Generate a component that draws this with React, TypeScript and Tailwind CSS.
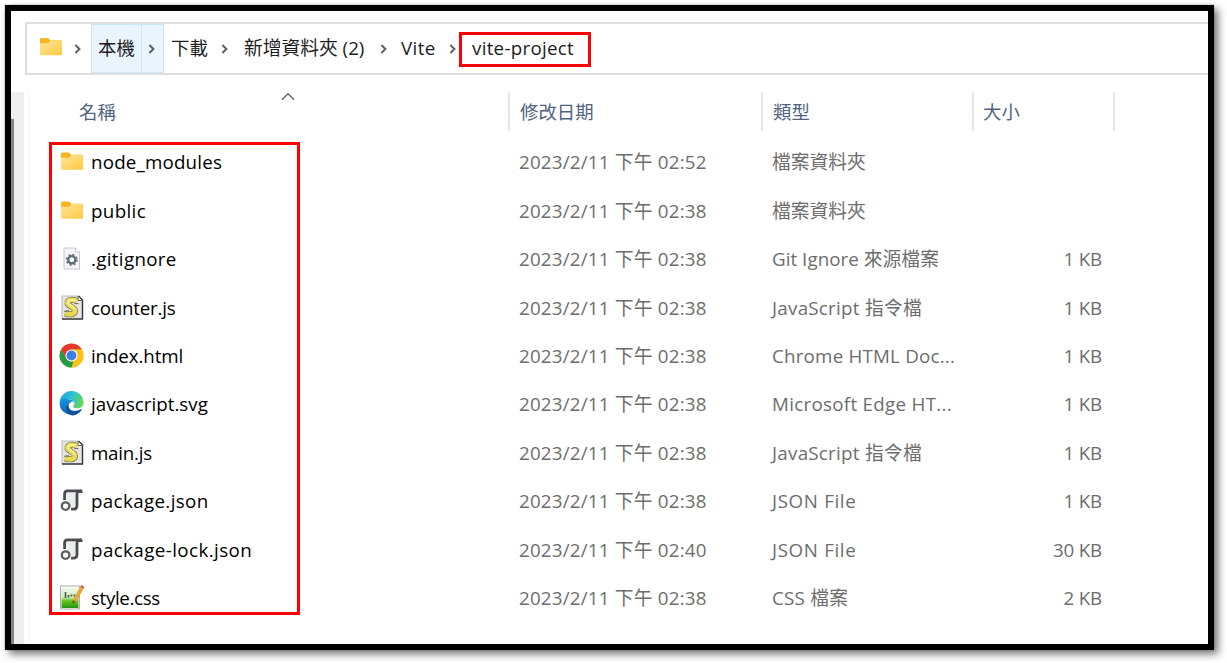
import React from 'react';

type IconKind = 'folder' | 'config' | 'script' | 'chrome' | 'edge' | 'json' | 'css';

const FolderIcon = () => (
  <svg className="block" width="24" height="24" viewBox="0 0 24 24">
    <defs>
      <linearGradient id="folderFront" x1="0" y1="0" x2="1" y2="1">
        <stop offset="0" stopColor="#ffe69c" />
        <stop offset="1" stopColor="#fdc940" />
      </linearGradient>
    </defs>
    <path d="M1 4.2Q1 3 2.2 3H8.2Q9 3 9.6 3.6L11.3 5.2H21.5Q23 5.2 23 6.5V12H1Z" fill="#f7b61d" />
    <path d="M1 8.3H8.6Q9.4 8.3 10 7.6L11.4 5.4H21.8Q23 5.4 23 6.6V19Q23 20.3 21.8 20.3H2.2Q1 20.3 1 19Z" fill="url(#folderFront)" />
  </svg>
);

const ConfigIcon = () => (
  <svg className="block" width="24" height="24" viewBox="0 0 24 24">
    <path d="M4 1.5H15.5L19.5 5.5V22.5H4Z" fill="#f4f4f4" stroke="#c6c8ca" strokeWidth="1" />
    <path d="M15.5 1.5V5.5H19.5" fill="#fff" stroke="#c6c8ca" strokeWidth="1" />
    <circle cx="11.8" cy="13.3" r="5" fill="none" stroke="#6f818c" strokeWidth="2.2" strokeDasharray="1.96 1.967" />
    <circle cx="11.8" cy="13.3" r="3.6" fill="#f8f8f8" stroke="#5a6d78" strokeWidth="2.3" />
  </svg>
);

const ScriptIcon = () => (
  <svg className="block" width="24" height="26" viewBox="0 0 24 26">
    <path d="M2 1.5H18.5L22.5 5.5V24.5H2Z" fill="#e4e4ea" />
    <path d="M2 24.5V1.5H18.5" fill="none" stroke="#bcbcc0" strokeWidth="1.1" />
    <path d="M18.5 1.5L22.5 5.5V24.5H2" fill="none" stroke="#333" strokeWidth="1.4" />
    <path d="M18 1.5V6H22.5Z" fill="#fff" stroke="#444" strokeWidth=".8" />
    <path d="M17 6.6C13.5 4.4 6.8 5 7.6 9C8.3 12 15.3 12.6 15 16.4C14.7 20.3 8.7 20.4 5 18.9" fill="none" stroke="#77743f" strokeWidth="6" />
    <path d="M17 6.6C13.5 4.4 6.8 5 7.6 9C8.3 12 15.3 12.6 15 16.4C14.7 20.3 8.7 20.4 5 18.9" fill="none" stroke="#e6da55" strokeWidth="4.8" />
    <path d="M16 6C12 4.6 7.5 5.6 8.3 8.8C9.2 11.4 15 12 14.8 15.5" fill="none" stroke="#f8f2a0" strokeWidth="1.8" />
    <path d="M4 16.8L9 16.3M14.5 9L18.5 9.2" stroke="#68663f" strokeWidth="1" />
  </svg>
);

const ChromeIcon = () => (
  <svg className="block" width="26" height="26" viewBox="0 0 26 26">
    <circle cx="13" cy="13" r="12.5" fill="#fbc116" />
    <path d="M2.2 6.75A12.5 12.5 0 0 1 23.8 6.75H13L7.6 16.1Z" fill="#e33b2e" />
    <path d="M2.2 6.75L7.6 16.1A6.2 6.2 0 0 0 15 18.9L13 25.5A12.5 12.5 0 0 1 2.2 6.75Z" fill="#229a4a" />
    <path d="M13 6.75H23.8A12.5 12.5 0 0 1 13 25.5L18.4 16.1Z" fill="#fbc116" />
    <circle cx="13" cy="13" r="6.25" fill="#fff" />
    <circle cx="13" cy="13" r="5.1" fill="#3e7ee8" />
  </svg>
);

const EdgeIcon = () => (
  <svg className="block" width="26" height="26" viewBox="0 0 26 26">
    <defs>
      <linearGradient id="edgeTop" x1="0" y1=".2" x2="1" y2=".5">
        <stop offset="0" stopColor="#22a5e3" />
        <stop offset=".5" stopColor="#2dc0d4" />
        <stop offset="1" stopColor="#62d957" />
      </linearGradient>
      <linearGradient id="edgeSide" x1="0" y1="0" x2="0" y2="1">
        <stop offset="0" stopColor="#1597dc" />
        <stop offset="1" stopColor="#0c65b8" />
      </linearGradient>
    </defs>
    <path d="M.6 12.4A12.4 12.4 0 0 1 25.5 12.6C25.5 16.4 22.4 18 19.2 18C16.5 18 14.6 17 14.6 16C14.6 15.4 16 14.7 16 12.9C16 10.6 13.3 8.6 9.8 8.6C5.6 8.6 1.6 10.5.6 12.4Z" fill="url(#edgeTop)" />
    <path d="M.6 12.4C1.5 7.5 7 7 9.8 8.6C12.7 8.6 15 10 15.5 11.5C13.5 9.7 9.8 12 9.8 15.2C9.8 20.3 15.5 23.2 21.3 21.4A12.4 12.4 0 0 1 .6 12.4Z" fill="url(#edgeSide)" />
    <path d="M9.8 15.2C9.8 20.3 15.5 22.6 22.7 19C23.5 18.6 24 19.2 23.5 19.8A12.4 12.4 0 0 1 14 25.4C8.5 24.5 5.6 19 8.7 14.5C9.8 12.7 11.8 11.1 13.5 11.2C11.4 12 9.8 13.3 9.8 15.2Z" fill="#124f9c" />
  </svg>
);

const JsonIcon = () => (
  <svg className="block" width="24" height="24" viewBox="0 0 24 24">
    <path d="M5.2 2.8H18V18.5H8Z" fill="#eceded" />
    <path d="M4.6 11.5V5.3Q4.6 2.4 7.4 2.4H21.5M17.8 2.6Q17 3.8 17 6V17.3Q17 20.7 13.3 20.7H11" fill="none" stroke="#4c4d50" strokeWidth="2.8" />
    <path d="M20 1Q23.4 1.2 22.4 4.4H17.8" fill="#4c4d50" />
    <circle cx="5.6" cy="17.6" r="3.8" fill="#fff" stroke="#5c5d60" strokeWidth="2.3" />
  </svg>
);

const CssIcon = () => (
  <svg className="block overflow-visible" width="26" height="26" viewBox="0 0 26 26">
    <defs>
      <linearGradient id="cssPage" x1="0" y1="0" x2="0" y2="1">
        <stop offset="0" stopColor="#f3f8ef" />
        <stop offset=".48" stopColor="#cce9b8" />
        <stop offset=".65" stopColor="#62c91b" />
        <stop offset="1" stopColor="#259017" />
      </linearGradient>
    </defs>
    <path d="M1.5 1.5H20.5V24.5H1.5Z" fill="#fff" stroke="#a9afa8" strokeWidth="1" />
    <path d="M2.5 3H19.5V23.5H2.5Z" fill="url(#cssPage)" />
    <path d="M6.5 7.5V13.5M9.5 10.5V13M12.5 10V12M15.5 10V12" stroke="#4a5a4a" strokeWidth="1.6" />
    <path d="M21.2 2.2L24.6 4.2L17.1 17.4L13.9 15.6Z" fill="#eba53a" />
    <path d="M21.2 2.2L22.2.4L25.4 2.2L24.6 4.2Z" fill="#c9564f" />
    <path d="M13.9 15.6L13.2 19.2L17.1 17.4Z" fill="#6c552f" />
  </svg>
);

const icons: Record<IconKind, () => React.ReactElement> = {
  folder: FolderIcon,
  config: ConfigIcon,
  script: ScriptIcon,
  chrome: ChromeIcon,
  edge: EdgeIcon,
  json: JsonIcon,
  css: CssIcon,
};

const Chevron = () => (
  <svg className="block shrink-0" width="8" height="10" viewBox="0 0 8 10">
    <path d="M1.4 1L5.4 5L1.4 9" fill="none" stroke="#606060" strokeWidth="2" />
  </svg>
);

interface FileEntry {
  icon: IconKind;
  name: string;
  time: string;
  type: string;
  size?: string;
  nameClass: string;
  typeClass: string;
}

const files: FileEntry[] = [
  { icon: 'folder', name: 'node_modules', time: '02:52', type: '檔案資料夾', nameClass: 'tracking-[0.19px]', typeClass: '' },
  { icon: 'folder', name: 'public', time: '02:38', type: '檔案資料夾', nameClass: 'tracking-[0.35px]', typeClass: '' },
  { icon: 'config', name: '.gitignore', time: '02:38', type: 'Git Ignore 來源檔案', size: '1 KB', nameClass: 'tracking-[0.33px]', typeClass: 'tracking-[0.05px]' },
  { icon: 'script', name: 'counter.js', time: '02:38', type: 'JavaScript 指令檔', size: '1 KB', nameClass: 'tracking-[-0.24px]', typeClass: 'tracking-[0.27px]' },
  { icon: 'chrome', name: 'index.html', time: '02:38', type: 'Chrome HTML Doc...', size: '1 KB', nameClass: 'tracking-[-0.12px]', typeClass: 'tracking-[0.21px]' },
  { icon: 'edge', name: 'javascript.svg', time: '02:38', type: 'Microsoft Edge HT...', size: '1 KB', nameClass: '', typeClass: 'tracking-[0.3px]' },
  { icon: 'script', name: 'main.js', time: '02:38', type: 'JavaScript 指令檔', size: '1 KB', nameClass: 'tracking-[-0.25px]', typeClass: 'tracking-[0.27px]' },
  { icon: 'json', name: 'package.json', time: '02:38', type: 'JSON File', size: '1 KB', nameClass: 'tracking-[0.36px]', typeClass: 'tracking-[0.65px]' },
  { icon: 'json', name: 'package-lock.json', time: '02:40', type: 'JSON File', size: '30 KB', nameClass: 'tracking-[0.41px]', typeClass: 'tracking-[0.65px]' },
  { icon: 'css', name: 'style.css', time: '02:38', type: 'CSS 檔案', size: '2 KB', nameClass: 'tracking-[-0.35px]', typeClass: 'tracking-[0.25px]' },
];

const FileRow = ({ file }: { file: FileEntry }) => {
  const Icon = icons[file.icon];
  return (
    <div className="flex h-[48.44px] items-center whitespace-nowrap text-[#6d6d6d]">
      <div className="flex w-[460px] shrink-0 items-center text-black">
        <div className="flex w-8 shrink-0 -translate-y-[0.5px] justify-start">
          <div className="flex w-[25px] justify-center"><Icon /></div>
        </div>
        <span className={file.nameClass}>{file.name}</span>
      </div>
      <span className="w-[253px] shrink-0 tracking-[0.21px]">2023/2/11 下午 {file.time}</span>
      <span className={`w-[211px] shrink-0 ${file.typeClass}`}>{file.type}</span>
      <span className="w-[119px] shrink-0 text-right tracking-[-0.2px]">{file.size}</span>
    </div>
  );
};

export default function App() {
  return (
    <div className="h-[663px] w-[1227px] overflow-hidden bg-white pt-[5px] pl-[5px] font-['Open_Sans','Noto_Sans_CJK_TC',sans-serif] text-[18.75px] leading-6">
      <div className="flex h-[645px] w-[1209px] flex-col overflow-hidden border-[6px] border-black bg-white shadow-[4px_4px_8px_rgba(0,0,0,0.55),0_0_1px_#777]">
        <nav className="mt-[11px] ml-[14px] flex h-[53px] shrink-0 items-center border-y-2 border-l-2 border-[#dedede] whitespace-nowrap text-[#1c1c1c]">
          <div className="ml-[12px] flex w-[24px] shrink-0 -translate-y-[2px] justify-center"><FolderIcon /></div>
          <div className="flex w-[27px] shrink-0 justify-center pl-[3px]"><Chevron /></div>
          <div className="ml-px flex h-[49px] w-[51px] shrink-0 items-center justify-center border border-[#cce6fa] bg-[#eaf4fe] pb-[2px] text-[18.4px]">本機</div>
          <div className="flex h-[49px] w-[22px] shrink-0 items-center justify-center border border-l-0 border-[#cce6fa] bg-[#eaf4fe] pr-[2px]"><Chevron /></div>
          <span className="ml-[7px] w-[50px] shrink-0 pb-[2px] text-[18.4px]">下載</span>
          <Chevron />
          <span className="ml-[15px] w-[136px] shrink-0 pb-[2px]">新增資料夾 (2)</span>
          <Chevron />
          <span className="ml-[13px] w-[48px] shrink-0 pb-[2px] tracking-[0.4px]">Vite</span>
          <Chevron />
          <div className="ml-[2px] flex h-[35px] w-[132px] shrink-0 translate-y-[1px] items-center border-[3px] border-[#fe0000] pl-[10px] tracking-[0.28px]"><span className="-translate-y-px pb-[2px]">vite-project</span></div>
        </nav>
        <div className="flex min-h-0 flex-1 pt-[17px]">
          <div className="flex w-[13px] shrink-0 bg-[#efefef] pt-[27px]">
            <div className="w-[3px] bg-[#858585]" />
          </div>
          <div className="ml-[4px] w-[2px] shrink-0 bg-[#f8f8f8]" />
          <div className="ml-[8px] min-w-0 flex-1">
            <div className="flex h-[39px] text-[18.4px] text-[#4f6480]">
              <div className="flex w-[472px] items-center border-r-2 border-[#e6e6e6] pl-[41px]">
                <span>名稱</span>
                <svg className="mb-[31px] ml-[165px]" width="14" height="9" viewBox="0 0 14 9"><path d="M1 7.8L7 1.8L13 7.8" fill="none" stroke="#666" strokeWidth="1.4" /></svg>
              </div>
              <div className="flex w-[253px] items-center border-r-2 border-[#e6e6e6] pl-[10px]">修改日期</div>
              <div className="flex w-[211px] items-center border-r-2 border-[#e6e6e6] pl-[10px]">類型</div>
              <div className="flex w-[141px] items-center border-r-2 border-[#e6e6e6] pl-[9px]">大小</div>
            </div>
            <div className="relative mt-[7px] pl-[21px]">
              {files.map((file) => <FileRow key={file.name} file={file} />)}
              <div className="pointer-events-none absolute top-[4px] left-[11px] h-[473px] w-[251px] border-[3px] border-[#fe0000]" />
            </div>
          </div>
        </div>
      </div>
    </div>
  );
}
